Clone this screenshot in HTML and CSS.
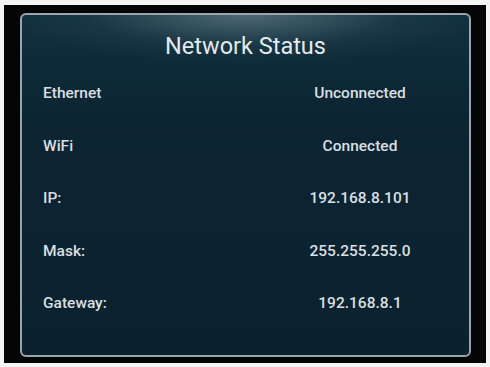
FILE: index.html
```html
<!DOCTYPE html>
<html>
<head>
<meta charset="utf-8">
<link rel="stylesheet" href="styles.css">
</head>
<body>
<div class="frame">
  <div class="panel">
    <h1 class="title">Network Status</h1>
    <div class="rows">
      <div class="row"><span class="label">Ethernet</span><span class="value">Unconnected</span></div>
      <div class="row"><span class="label">WiFi</span><span class="value">Connected</span></div>
      <div class="row"><span class="label">IP:</span><span class="value">192.168.8.101</span></div>
      <div class="row"><span class="label">Mask:</span><span class="value">255.255.255.0</span></div>
      <div class="row"><span class="label">Gateway:</span><span class="value">192.168.8.1</span></div>
    </div>
  </div>
</div>
</body>
</html>
```
FILE: styles.css
```css
html, body {
  margin: 0;
  padding: 0;
  background: #f4f4f4;
}
body {
  width: 490px;
  height: 367px;
  padding: 5px 4px 4px 4px;
  box-sizing: border-box;
  font-family: Roboto, "Liberation Sans", sans-serif;
}
.frame {
  background: #030506;
  height: 358px;
  width: 482px;
  padding: 8px 15px 6px 16px;
  box-sizing: border-box;
  display: flex;
}
.panel {
  flex: 1;
  border: 2px solid #9aa4aa;
  border-radius: 6px;
  background:
    radial-gradient(ellipse 240px 48px at 50% 0%, rgba(140,160,170,0.5), rgba(60,90,105,0.18) 65%, rgba(0,0,0,0) 100%),
    linear-gradient(#11303e, #0c2532 30%, #0b222e);
  color: #d9dfe2;
  display: flex;
  flex-direction: column;
}
.title {
  margin: 0;
  font-weight: 400;
  font-size: 23.5px;
  text-align: center;
  line-height: 28px;
  padding-top: 17px;
  color: #e4e9eb;
}
.rows {
  display: flex;
  flex-direction: column;
  padding-top: 24px;
}
.row {
  display: grid;
  grid-template-columns: 1fr 180px;
  height: 52.5px;
  align-items: start;
  font-size: 15.5px;
  font-weight: 500;
  line-height: 19px;
  padding-left: 21px;
  padding-right: 19px;
}
.value {
  text-align: center;
}
```
